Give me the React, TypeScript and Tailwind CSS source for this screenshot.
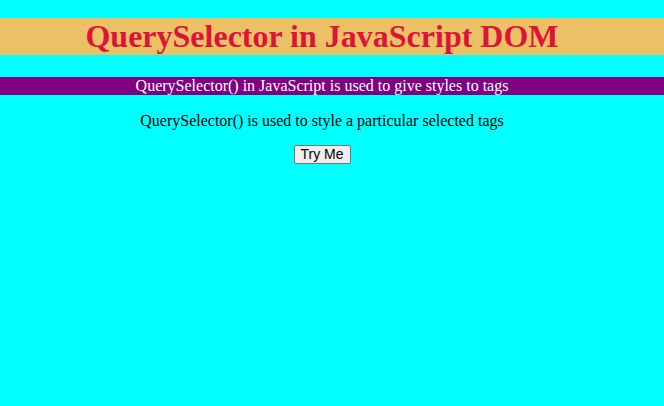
export default function App() {
  return (
    <div className="min-h-[406px] w-full bg-[#00ffff] pt-[18px] font-['Liberation_Serif',serif]">
      <h1 className="bg-[#ecc064] pr-[20px] text-center text-[32px] font-bold leading-[37px] text-[#dc143c]">
        QuerySelector in JavaScript DOM
      </h1>
      <div className="mt-[22px] bg-[#800080] pr-[20px] text-center text-[16px] leading-[18px] text-white">
        QuerySelector() in JavaScript is used to give styles to tags
      </div>
      <p className="mt-[17px] pr-[20px] text-center text-[16px] leading-[18px] text-black">
        QuerySelector() is used to style a particular selected tags
      </p>
      <div className="mt-[15px] flex justify-center pr-[20px]">
        <button
          type="button"
          className="h-[19px] w-[57px] rounded-[2px] border border-[#767676] bg-[#efefef] p-0 font-['Liberation_Sans',sans-serif] text-[14px] leading-[17px] text-black"
        >
          Try Me
        </button>
      </div>
    </div>
  );
}
